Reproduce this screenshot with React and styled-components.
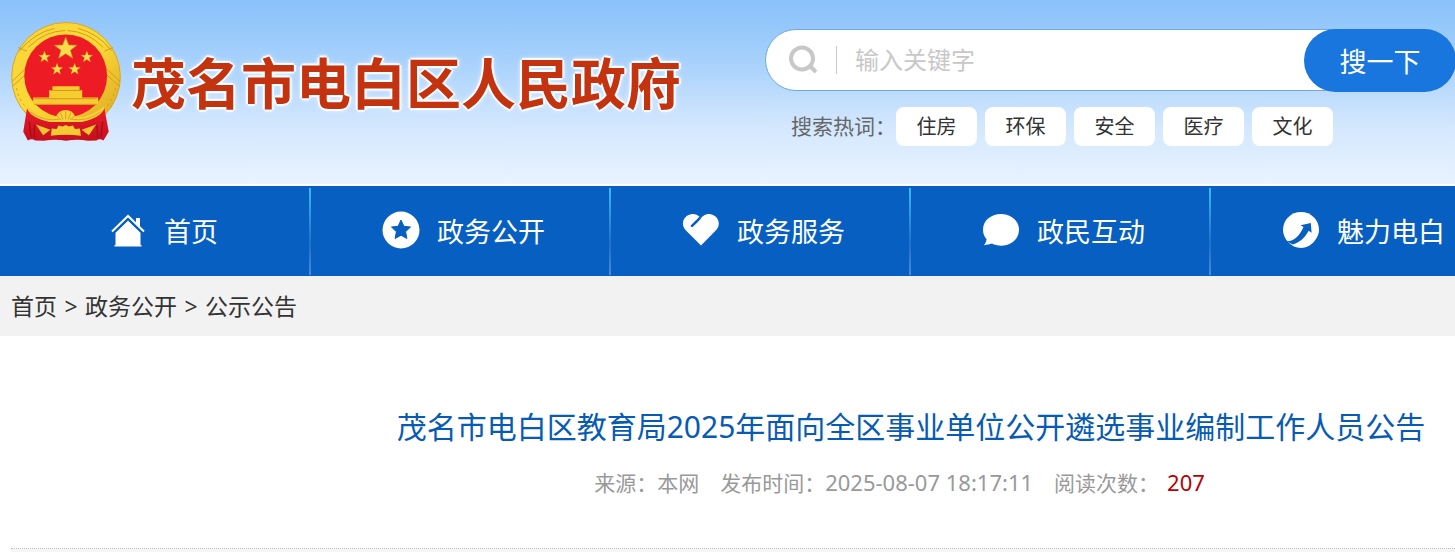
import styled, { createGlobalStyle } from "styled-components";

const hotWords = ["住房", "环保", "安全", "医疗", "文化"];

const navItems = [
	{ label: "首页", icon: HouseIcon },
	{ label: "政务公开", icon: StarIcon },
	{ label: "政务服务", icon: HeartIcon },
	{ label: "政民互动", icon: BubbleIcon },
	{ label: "魅力电白", icon: ArrowIcon },
];

const crumbs = ["首页", "政务公开", "公示公告"];

const starPoints = "0,-10 2.6,-3.2 9.8,-3 4.1,1.3 6.1,8.3 0,4.3 -6.1,8.3 -4.1,1.3 -9.8,-3 -2.6,-3.2";

function HouseIcon() {
	return (
		<NavIcon viewBox="0 0 38 38">
			<path d="M27 7h4v9l-4-4z" />
			<path d="M19 9.500 31.500 21.500v13h-25v-13z" />
			<path d="M5.500 34h27v1.500h-27z" />
			<path d="M3 20.500 19 5 35 20.500" fill="none" stroke="#fff" strokeWidth="2" />
			<path d="M5.500 21.500 19 8.300l13.500 13.200" fill="none" stroke="#075fc1" strokeWidth="1.500" />
		</NavIcon>
	);
}

function StarIcon() {
	return (
		<NavIcon viewBox="0 0 38 38">
			<circle cx="19" cy="19" r="18.500" />
			<path
				d="m19 9 2.900 6.300 6.600.7-4.900 4.700 1.300 6.800-5.900-3.300-5.900 3.300 1.300-6.800-4.900-4.700 6.600-.7z"
				fill="#075fc1"
				stroke="#075fc1"
				strokeWidth="1"
				strokeLinejoin="round"
			/>
		</NavIcon>
	);
}

function HeartIcon() {
	return (
		<NavIcon viewBox="0 0 38 38">
			<path d="M19 34.500 3.500 19C-1.500 13.500 1 5 9 3.200c3-.5 5.500.2 7.500 1.800l2.500 1.900c3-3.400 6.700-4.500 10.500-3.500 7.500 2 9.500 10.300 4.700 15.600z" />
			<path d="m10 14.800 4.500-4.300 3.200-3.400" fill="none" stroke="#075fc1" strokeWidth="2.500" strokeLinecap="round" />
		</NavIcon>
	);
}

function BubbleIcon() {
	return (
		<NavIcon viewBox="0 0 38 38">
			<path d="M19 3c10.300 0 18 6.800 18 15.800S29.300 34.700 19 34.700c-3.600 0-6.500-.8-9-2.100-2.400.7-4.800 1.300-8 1.700 1.500-2 2.300-4 2.600-6C2.300 25.600 1 22.500 1 18.800 1 9.800 8.700 3 19 3z" />
		</NavIcon>
	);
}

function ArrowIcon() {
	return (
		<NavIcon viewBox="0 0 38 38">
			<path d="M19 1c10 0 18 7.800 18 17.800C37 27 29 37 19 37S1 28 1 18.800C1 8.800 9 1 19 1z" />
			<path
				d="m18.500 14.300 10.300-2.300.8 9.800-3-2c-3.200 6.200-8.300 11.700-15.800 13.700L4.500 30.200c7.500.3 13.200-5.500 17-14.200z"
				fill="#075fc1"
			/>
		</NavIcon>
	);
}

function Emblem() {
	return (
		<EmblemSvg viewBox="33 33 332 362" aria-hidden="true">
			<defs>
				<linearGradient id="gold" x1="0" y1="0" x2="1" y2="1">
					<stop offset="0" stopColor="#f8d43c" />
					<stop offset=".5" stopColor="#fbd936" />
					<stop offset="1" stopColor="#d9a321" />
				</linearGradient>
				<linearGradient id="drape" x1="0" y1="0" x2="0" y2="1">
					<stop offset="0" stopColor="#ee1c28" />
					<stop offset="1" stopColor="#c40f1d" />
				</linearGradient>
			</defs>
			<ellipse cx="199" cy="200" rx="164" ry="164" fill="url(#gold)" stroke="#dba526" strokeWidth="3" />
			<g fill="none" stroke="#d39c20" strokeWidth="3" strokeLinecap="round">
				<path d="M58 122q45-55 105-68M86 110q48-48 110-50M236 54q60 15 100 66M204 60q63 4 106 50" />
				<path d="m36 214 38-36M38 228l36-32M362 214l-38-36M360 228l-36-32M56 112l24 10M340 112l-24 10" />
				<path d="M50 235q6 30 24 52M348 235q-6 30-24 52" strokeDasharray="5 12" />
			</g>
			<circle cx="198" cy="197" r="125" fill="#ed1c24" />
			<g fill="#f9dc4a" stroke="#c98a1b" strokeWidth=".5">
				<polygon points={starPoints} transform="translate(198 115) scale(3.500)" />
				<polygon points={starPoints} transform="translate(134 140) scale(1.800)" />
				<polygon points={starPoints} transform="translate(262 140) scale(1.800)" />
				<polygon points={starPoints} transform="translate(172 177) scale(1.800)" />
				<polygon points={starPoints} transform="translate(225 177) scale(1.800)" />
			</g>
			<path d="M158 228h82v12h8v22h48v22H100v-22h48v-22h10z" fill="#f6cc31" />
			<path d="M150 241h96M104 266h188M104 283h188" stroke="#cf961d" strokeWidth="3" />
			<path d="M82 290q45 42 116 42 71 0 116-42l14 76-16 26q-12-8-21 0l-26 1q-30-6-66 0-35-6-66 0l-27-1q-10-8-22 0l-14-26z" fill="url(#drape)" />
			<path d="M80 288q52 40 88 34 8-22 30-22t30 22q36 6 88-34-4 34-70 48h-96q-66-14-70-48z" fill="#f9d138" />
			<g stroke="#c98f18" strokeWidth="2" fill="none">
				<path d="m198 302v26M182 307l8 22M214 307l-8 22M171 318l14 12M225 318l-14 12" />
				<path d="M92 306q42 30 88 22M304 306q-42 30-88 22" />
			</g>
			<path d="m108 344 44 16-22 16zM290 344l-44 16 22 16z" fill="#f3c431" />
			<path d="m153 378 3-22 15 1 5-10 13 3 9-5 10 5 12-3 6 10 15-1 3 22q-46-6-91 0z" fill="#f6cb32" />
			<path d="m88 335 6 47M104 345l-1 40M292 345l3 40M310 335l-6 47" stroke="#a60d18" strokeWidth="4" fill="none" />
		</EmblemSvg>
	);
}

export default function App() {
	return (
		<>
			<GlobalStyle />
			<Header>
				<Container>
					<HeaderRow>
						<Brand href="#">
							<Emblem />
							<SiteName>茂名市电白区人民政府</SiteName>
						</Brand>
						<Search>
							<SearchBar onSubmit={e => e.preventDefault()}>
								<SearchField>
									<SearchIcon viewBox="0 0 30 30">
										<circle cx="14" cy="13.500" r="11" />
										<path d="m21 20 7 7" />
									</SearchIcon>
									<SearchInput type="text" placeholder="输入关键字" aria-label="输入关键字" />
								</SearchField>
								<SearchButton type="submit">搜一下</SearchButton>
							</SearchBar>
							<HotWords>
								<span>搜索热词：</span>
								{hotWords.map(word => (
									<HotWord href="#" key={word}>
										{word}
									</HotWord>
								))}
							</HotWords>
						</Search>
					</HeaderRow>
				</Container>
			</Header>
			<Nav>
				<Container>
					<NavList>
						{navItems.map(({ label, icon: Icon }) => (
							<NavItem key={label}>
								<NavLink href="#">
									<Icon />
									{label}
								</NavLink>
							</NavItem>
						))}
					</NavList>
				</Container>
			</Nav>
			<CrumbBar>
				<Container>
					<Crumbs>
						{crumbs.map((crumb, i) => (
							<Crumb key={crumb}>
								{i > 0 && <Separator>&gt;</Separator>}
								<a href="#">{crumb}</a>
							</Crumb>
						))}
					</Crumbs>
				</Container>
			</CrumbBar>
			<Container>
				<ArticleHead>
					<Title>茂名市电白区教育局2025年面向全区事业单位公开遴选事业编制工作人员公告</Title>
					<Meta>
						<span>来源：本网</span>
						<span>
							发布时间：<Digits>2025-08-07 18:17:11</Digits>
						</span>
						<span>
							阅读次数：<Views>207</Views>
						</span>
					</Meta>
				</ArticleHead>
				<ArticleBody />
			</Container>
		</>
	);
}

const GlobalStyle = createGlobalStyle`
	*, *::before, *::after {
		box-sizing: border-box;
	}
	html {
		overflow-x: hidden;
	}
	body {
		margin: 0;
		overflow-x: hidden;
		background: #fff;
		color: #333;
		font-family: "Noto Sans", "Noto Sans CJK SC", sans-serif;
	}
	a {
		color: inherit;
		text-decoration: none;
	}
`;

const Container = styled.div`
	min-width: 1800px;
	margin: 0 11px;
`;

const Header = styled.header`
	background: linear-gradient(#88c1fa, #a9d2fc 35%, #d3e7fe 68%, #e9f3ff);
	border-bottom: 2px solid #fff;
`;

const HeaderRow = styled.div`
	display: flex;
	align-items: flex-start;
	gap: 84px;
	padding: 21px 0 38px;
`;

const Brand = styled.a`
	display: flex;
	align-items: center;
	gap: 10px;
`;

const EmblemSvg = styled.svg`
	width: 110px;
	height: 121px;
`;

const SiteName = styled.h1`
	margin: 0;
	padding-bottom: 4px;
	color: #c4330f;
	font-family: "Noto Sans CJK SC", sans-serif;
	font-size: 55px;
	font-weight: 700;
	line-height: 80px;
	white-space: nowrap;
	text-shadow:
		2px 0 1px #fff,
		-2px 0 1px #fff,
		0 2px 1px #fff,
		0 -2px 1px #fff,
		0 0 6px #fff;
`;

const Search = styled.div`
	padding-top: 8px;
`;

const SearchBar = styled.form`
	display: flex;
	height: 63px;
`;

const SearchField = styled.label`
	display: flex;
	align-items: center;
	width: 580px;
	height: 62px;
	padding-left: 22px;
	border: 1px solid #6fa7e0;
	border-radius: 31px 0 0 31px;
	background: #fff;
`;

const SearchIcon = styled.svg`
	width: 30px;
	height: 30px;
	fill: none;
	stroke: #c8c8c8;
	stroke-width: 4;
`;

const SearchInput = styled.input`
	flex: 1;
	min-width: 0;
	height: 28px;
	margin-left: 18px;
	padding: 0 0 0 18px;
	border: 0;
	border-left: 1px solid #ccc;
	outline: 0;
	background: none;
	color: #333;
	font-family: inherit;
	font-size: 24px;
	line-height: 28px;
	&::placeholder {
		color: #c8c8c8;
	}
`;

const SearchButton = styled.button`
	width: 152px;
	margin-left: -41px;
	border: 0;
	border-radius: 32px;
	background: #1876de;
	color: #fff;
	font-family: inherit;
	font-size: 27px;
	cursor: pointer;
`;

const HotWords = styled.div`
	display: flex;
	align-items: center;
	gap: 8px;
	margin-top: 15px;
	padding-left: 26px;
	color: #666;
	font-size: 21px;
	line-height: 39px;
	> span {
		margin-right: -8px;
	}
`;

const HotWord = styled.a`
	min-width: 81px;
	border-radius: 8px;
	background: #fff;
	color: #333;
	font-size: 20px;
	text-align: center;
`;

const Nav = styled.nav`
	background: #075fc1;
`;

const NavList = styled.ul`
	display: flex;
	margin: 0;
	padding: 2px 0 1px;
	list-style: none;
`;

const NavItem = styled.li`
	flex: 0 0 300px;
	border-right: 2px solid;
	border-image: linear-gradient(#3fbcf2, #1f6fc8 65%, #4a8ddb) 1;
`;

const NavLink = styled.a`
	display: flex;
	align-items: center;
	justify-content: center;
	gap: 17px;
	height: 87px;
	padding: 0 0 3px 7px;
	color: #fff;
	font-size: 27px;
`;

const NavIcon = styled.svg`
	width: 38px;
	height: 38px;
	fill: #fff;
`;

const CrumbBar = styled.div`
	background: #f2f2f2;
`;

const Crumbs = styled.div`
	display: flex;
	font-size: 23px;
	line-height: 60px;
`;

const Crumb = styled.span`
	display: flex;
`;

const Separator = styled.span`
	width: 28px;
	text-align: center;
`;

const ArticleHead = styled.div`
	padding: 68px 0 44px;
	border-bottom: 1px dotted #bbb;
	text-align: center;
`;

const Title = styled.h2`
	margin: 0;
	color: #075bb3;
	font-size: 30px;
	font-weight: 400;
	line-height: 46px;
`;

const Meta = styled.div`
	display: flex;
	justify-content: center;
	align-items: baseline;
	gap: 21px;
	margin-top: 11px;
	padding-right: 23px;
	color: #999;
	font-size: 21px;
	line-height: 42px;
`;

const Digits = styled.time`
	font-size: 22px;
`;

const Views = styled.span`
	margin-left: 8px;
	color: #b80000;
	font-size: 22px;
`;

const ArticleBody = styled.div`
	min-height: 3px;
	background: #f5f5f5;
`;
